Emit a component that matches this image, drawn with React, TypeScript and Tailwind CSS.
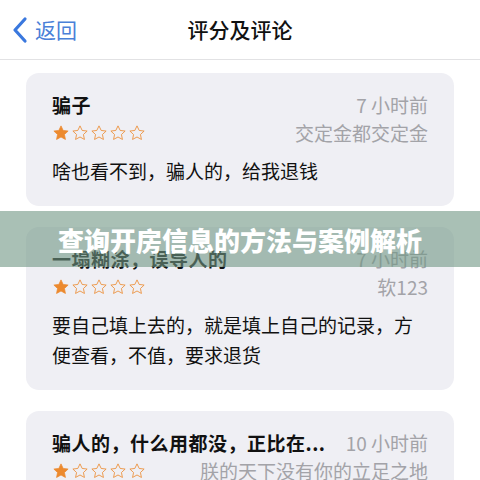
import React from 'react';

const font = { fontFamily: '"Noto Sans CJK SC", "Noto Sans", sans-serif' };

function Stars({ count }: { count: number }) {
  return (
    <div className="flex items-center gap-[1px]">
      {[0, 1, 2, 3, 4].map((i) => (
        <svg key={i} width="18" height="18" viewBox="0 0 24 24">
          <path
            d="M12 2.5l2.9 6.1 6.6.8-4.9 4.6 1.3 6.6L12 17.3l-5.9 3.3 1.3-6.6-4.9-4.6 6.6-.8z"
            fill={i < count ? '#ec8a2f' : 'none'}
            stroke="#ec8a2f"
            strokeWidth={i < count ? 1 : 1.1}
            strokeLinejoin="round"
          />
        </svg>
      ))}
    </div>
  );
}

type Review = { title: string; time: string; author: string; body: string[] };

const reviews: Review[] = [
  { title: '骗子', time: '7 小时前', author: '交定金都交定金', body: ['啥也看不到，骗人的，给我退钱'] },
  {
    title: '一塌糊涂，误导人的',
    time: '7 小时前',
    author: '软123',
    body: ['要自己填上去的，就是填上自己的记录，方', '便查看，不值，要求退货'],
  },
  { title: '骗人的，什么用都没，正比在...', time: '10 小时前', author: '朕的天下没有你的立足之地', body: ['垃圾'] },
];

function ReviewCard({ r }: { r: Review }) {
  return (
    <div className="bg-[#efeff4] rounded-[13px] px-[26px] pt-[20px] pb-[20px]">
      <div className="flex items-center justify-between h-[24px]">
        <span className="text-[19px] font-semibold text-[#111] tracking-[0.5px]">{r.title}</span>
        <span className="text-[19px] text-[#a3a3a8]">{r.time}</span>
      </div>
      <div className="flex items-center justify-between h-[28px] mt-[2px]">
        <Stars count={1} />
        <span className="text-[19px] text-[#a3a3a8]">{r.author}</span>
      </div>
      <div className="mt-[9px] text-[19px] leading-[30px] text-[#111]">
        {r.body.map((l, i) => (
          <div key={i}>{l}</div>
        ))}
      </div>
    </div>
  );
}

export default function App() {
  return (
    <div className="relative w-[480px] h-[480px] overflow-hidden bg-white" style={font}>
      {/* Header */}
      <div className="h-[60px] border-b border-[#e2e2e4] flex items-center relative">
        <div className="flex items-center pl-[11px] gap-[6px]">
          <svg width="18" height="28" viewBox="0 0 18 28">
            <path d="M14 3L4 14l10 11" fill="none" stroke="#3a78de" strokeWidth="3.2" strokeLinecap="round" strokeLinejoin="round" />
          </svg>
          <span className="text-[21px] text-[#4a80d8]">返回</span>
        </div>
        <div className="absolute left-0 right-0 text-center text-[21px] font-medium text-[#111] pointer-events-none">
          评分及评论
        </div>
      </div>

      {/* Reviews */}
      <div className="px-[26px] pt-[13px] flex flex-col gap-[21px]">
        {reviews.map((r, i) => (
          <ReviewCard key={i} r={r} />
        ))}
      </div>

      {/* Overlay banner */}
      <div className="absolute left-0 right-0 top-[211px] h-[56px] bg-[#6f9683]/60 flex items-center justify-center">
        <span className="text-white text-[26px] font-black">查询开房信息的方法与案例解析</span>
      </div>
    </div>
  );
}
